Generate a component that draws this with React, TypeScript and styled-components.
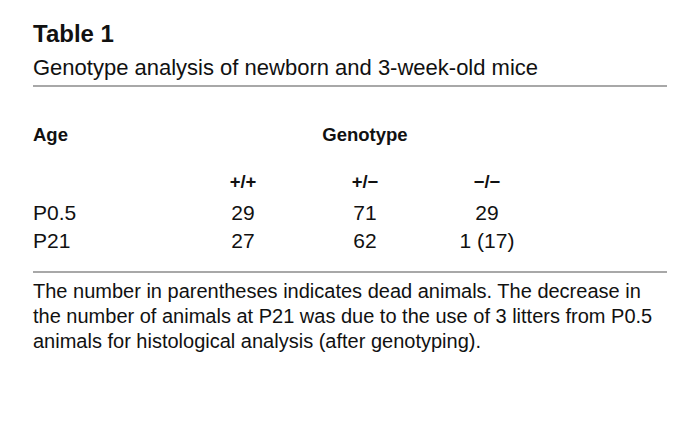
import React from "react";
import styled, { createGlobalStyle } from "styled-components";

const GlobalStyle = createGlobalStyle`
  body {
    margin: 0;
    background: #ffffff;
    color: #111111;
  }
`;

const Page = styled.div`
  width: 700px;
  height: 430px;
  box-sizing: border-box;
  padding: 21px 33px 0 33px;
  background: #ffffff;
  font-family: "Liberation Sans", Arial, sans-serif;
`;

const Title = styled.div`
  font-weight: 700;
  font-size: 24px;
  line-height: 26px;
`;

const Subtitle = styled.div`
  margin-top: 6px;
  font-size: 22px;
  line-height: 30px;
  padding-bottom: 2px;
  border-bottom: 2px solid #a8a8a8;
`;

const Grid = styled.div`
  display: grid;
  grid-template-columns: 149px 122px 122px 122px;
  padding: 34px 0 16px;
  border-bottom: 2px solid #a8a8a8;
`;

const Head = styled.div<{ $span?: number; $center?: boolean; $gap?: number }>`
  grid-column: span ${(p) => p.$span ?? 1};
  text-align: ${(p) => (p.$center ? "center" : "left")};
  margin-bottom: ${(p) => p.$gap ?? 0}px;
  font-weight: 700;
  font-size: 18.5px;
  line-height: 28px;
`;

const Cell = styled.div<{ $center?: boolean }>`
  text-align: ${(p) => (p.$center ? "center" : "left")};
  font-size: 21px;
  line-height: 28px;
`;

const Note = styled.p`
  margin: 6px 0 0;
  font-size: 20px;
  line-height: 25px;
`;

const rows = [
  { age: "P0.5", values: ["29", "71", "29"] },
  { age: "P21", values: ["27", "62", "1 (17)"] },
];

export default function App() {
  return (
    <Page>
      <GlobalStyle />
      <Title>Table 1</Title>
      <Subtitle>Genotype analysis of newborn and 3-week-old mice</Subtitle>
      <Grid>
        <Head $gap={19}>Age</Head>
        <Head $span={3} $center $gap={19}>
          Genotype
        </Head>
        <Head $gap={3} />
        <Head $center $gap={3}>+/+</Head>
        <Head $center $gap={3}>+/−</Head>
        <Head $center $gap={3}>−/−</Head>
        {rows.map((r) => (
          <React.Fragment key={r.age}>
            <Cell>{r.age}</Cell>
            {r.values.map((v, i) => (
              <Cell key={i} $center>
                {v}
              </Cell>
            ))}
          </React.Fragment>
        ))}
      </Grid>
      <Note>
        The number in parentheses indicates dead animals. The decrease in the
        number of animals at P21 was due to the use of 3 litters from P0.5
        animals for histological analysis (after genotyping).
      </Note>
    </Page>
  );
}
